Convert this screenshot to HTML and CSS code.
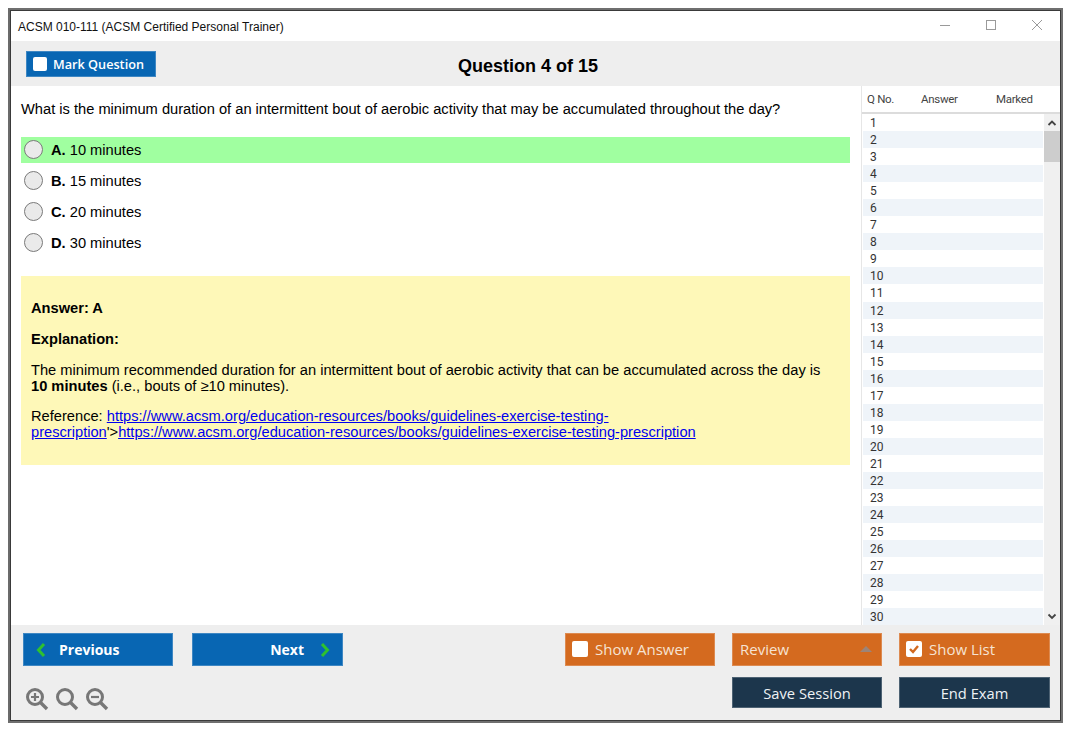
FILE: index.html
```html
<!DOCTYPE html>
<html lang="en">
<head>
<meta charset="utf-8">
<title>ACSM 010-111</title>
<link rel="stylesheet" href="styles.css">
</head>
<body>
<div class="window">
  <header class="titlebar">
    <span class="title">ACSM 010-111 (ACSM Certified Personal Trainer)</span>
    <div class="winctl">
      <svg width="12" height="12" viewBox="0 0 12 12"><path d="M1 6.5h10" stroke="#9a9a9a" fill="none"/></svg>
      <svg width="12" height="12" viewBox="0 0 12 12"><rect x="1.5" y="1.5" width="9" height="9" stroke="#9a9a9a" fill="none"/></svg>
      <svg width="12" height="12" viewBox="0 0 12 12"><path d="M1 1l10 10M11 1L1 11" stroke="#9a9a9a" fill="none"/></svg>
    </div>
  </header>
  <div class="toolbar">
    <button class="btn blue mark"><span class="box"></span>Mark Question</button>
    <h1 class="qcount">Question 4 of 15</h1>
  </div>
  <div class="main">
    <section class="content">
      <p class="question">What is the minimum duration of an intermittent bout of aerobic activity that may be accumulated throughout the day?</p>
      <div class="options">
        <div class="option correct"><span class="radio"></span><span><b>A.</b> 10 minutes</span></div>
        <div class="option"><span class="radio"></span><span><b>B.</b> 15 minutes</span></div>
        <div class="option"><span class="radio"></span><span><b>C.</b> 20 minutes</span></div>
        <div class="option"><span class="radio"></span><span><b>D.</b> 30 minutes</span></div>
      </div>
      <div class="answer">
        <p class="a-line"><b>Answer: A</b></p>
        <p class="a-line"><b>Explanation:</b></p>
        <p class="a-para">The minimum recommended duration for an intermittent bout of aerobic activity that can be accumulated across the day is <b>10 minutes</b> (i.e., bouts of ≥10 minutes).</p>
        <p class="a-para">Reference: <a href="#">https://www.acsm.org/education-resources/books/guidelines-exercise-testing-prescription</a>'&gt;<a href="#">https://www.acsm.org/education-resources/books/guidelines-exercise-testing-prescription</a></p>
      </div>
    </section>
    <aside class="qlist">
      <div class="qhead"><span class="c1">Q No.</span><span class="c2">Answer</span><span class="c3">Marked</span></div>
      <div class="qbody">
        <div class="rows">
          <div class="row">1</div><div class="row">2</div><div class="row">3</div><div class="row">4</div><div class="row">5</div>
          <div class="row">6</div><div class="row">7</div><div class="row">8</div><div class="row">9</div><div class="row">10</div>
          <div class="row">11</div><div class="row">12</div><div class="row">13</div><div class="row">14</div><div class="row">15</div>
          <div class="row">16</div><div class="row">17</div><div class="row">18</div><div class="row">19</div><div class="row">20</div>
          <div class="row">21</div><div class="row">22</div><div class="row">23</div><div class="row">24</div><div class="row">25</div>
          <div class="row">26</div><div class="row">27</div><div class="row">28</div><div class="row">29</div><div class="row">30</div>
        </div>
        <div class="scrollbar">
          <svg class="arrow" width="16" height="17" viewBox="0 0 16 17"><path d="M4.500 11l3.500-3.500 3.500 3.500" stroke="#444" stroke-width="1.800" fill="none"/></svg>
          <div class="thumb"></div>
          <div class="track"></div>
          <svg class="arrow" width="16" height="17" viewBox="0 0 16 17"><path d="M4.500 6.500l3.500 3.500 3.500-3.500" stroke="#444" stroke-width="1.800" fill="none"/></svg>
        </div>
      </div>
    </aside>
  </div>
  <footer class="footer">
    <div class="foot-left">
      <div class="nav">
        <button class="btn blue navbtn prev"><svg width="12" height="16" viewBox="0 0 12 16"><path d="M9 2L3.500 8 9 14" stroke="#2fc12f" stroke-width="3" fill="none"/></svg>Previous</button>
        <button class="btn blue navbtn next">Next<svg width="12" height="16" viewBox="0 0 12 16"><path d="M3 2l5.500 6L3 14" stroke="#2fc12f" stroke-width="3" fill="none"/></svg></button>
      </div>
      <div class="zoom">
        <svg width="24" height="24" viewBox="0 0 24 24"><circle cx="10" cy="10" r="7.500" stroke="#777" stroke-width="3" fill="none"/><path d="M15.500 15.500L22 22" stroke="#777" stroke-width="3.400" fill="none"/><path d="M6 10h8M10 6v8" stroke="#777" stroke-width="2.200" fill="none"/></svg>
        <svg width="24" height="24" viewBox="0 0 24 24"><circle cx="10" cy="10" r="7.500" stroke="#777" stroke-width="3" fill="none"/><path d="M15.500 15.500L22 22" stroke="#777" stroke-width="3.400" fill="none"/></svg>
        <svg width="24" height="24" viewBox="0 0 24 24"><circle cx="10" cy="10" r="7.500" stroke="#777" stroke-width="3" fill="none"/><path d="M15.500 15.500L22 22" stroke="#777" stroke-width="3.400" fill="none"/><path d="M6 10h8" stroke="#777" stroke-width="2.200" fill="none"/></svg>
      </div>
    </div>
    <div class="foot-right">
      <button class="btn orange"><span class="box"></span>Show Answer</button>
      <button class="btn orange review">Review<span class="caret"></span></button>
      <button class="btn orange"><span class="box"><svg width="14" height="14" viewBox="0 0 14 14"><path d="M3 7l3 3 5-6" stroke="#d2691f" stroke-width="2.400" fill="none"/></svg></span>Show List</button>
      <span></span>
      <button class="btn navy">Save Session</button>
      <button class="btn navy">End Exam</button>
    </div>
  </footer>
</div>
</body>
</html>
```
FILE: styles.css
```css
* { box-sizing: border-box; }
html, body { margin: 0; padding: 0; background: #fff; }
body { padding: 8px 12px 12px 8px; height: 735px; overflow: hidden; font-family: "Liberation Sans", Arial, sans-serif; color: #000; }
.window {
  width: 1055px; height: 715px;
  border: 3px solid #6f6f6f;
  border-left-color: #6b6b6b;
  outline: 1px solid #3a3a3a; outline-offset: -3px;
  display: flex; flex-direction: column; background: #fff;
}
.titlebar { height: 30px; flex: none; display: flex; align-items: center; justify-content: space-between; padding: 2px 17px 0 7px; background: #fff; }
.title { font-size: 12px; color: #111; }
.winctl { display: flex; gap: 34px; margin-top: -5px; }
.toolbar { height: 45px; flex: none; background: #eeeeee; display: flex; align-items: center; position: relative; padding: 0 0 0 15px; }
.qcount { position: absolute; left: 0; right: 15px; margin: 0; text-align: center; font-size: 18px; line-height: 50px; top: 0; font-weight: bold; pointer-events: none; }
.btn { border: 1px solid rgba(255,255,255,.22); margin: 0; color: #fff; font-family: "Open Sans", sans-serif; display: flex; align-items: center; padding: 0; cursor: default; }
.blue { background: #0866b3; }
.orange { background: #d46a1f; }
.navy { background: #1c364c; justify-content: center; font-size: 14.700px; color: #eef2f5; height: 31px; }
.box { width: 14px; height: 14px; background: #fff; border-radius: 2px; display: block; flex: none; }
.mark { width: 130px; height: 26px; margin-top: 1px; font-size: 12.700px; font-weight: 600; padding-left: 6px; gap: 6px; }
.main { flex: 1; min-height: 0; display: flex; }
.content { flex: 1; min-width: 0; padding: 0 11px 0 10px; }
.question { margin: 15px 0 0; font-size: 14.667px; line-height: 17px; }
.options { margin-top: 19px; display: flex; flex-direction: column; gap: 5px; }
.option { height: 26px; display: flex; align-items: center; gap: 8px; padding-left: 3px; font-size: 14.667px; }
.option.correct { background: #a0ffa0; }
.radio { width: 19px; height: 19px; margin-top: -1px; border-radius: 50%; background: #eaeaea; border: 1px solid #7a7a7a; flex: none; }
.answer { margin-top: 20px; height: 189px; background: #fef8b8; padding: 24px 10px 0; font-size: 14.667px; line-height: 16px; }
.answer p { margin: 0; }
.a-line { margin-bottom: 15px !important; }
.a-para { margin-bottom: 14px !important; }
.answer a { color: #0000ee; text-decoration: underline; }
.qlist { width: 199px; flex: none; display: flex; flex-direction: column; border-left: 1px solid #e6e6e6; padding-top: 1px; font-family: Roboto, sans-serif; color: #333; }
.qhead { height: 27px; flex: none; display: flex; align-items: center; font-size: 11.500px; letter-spacing: -0.3px; padding-bottom: 2px; border-bottom: 2px solid #dcdcdc; color: #444; }
.c1 { width: 59px; padding-left: 5px; }
.c2 { width: 75px; }
.qbody { flex: 1; min-height: 0; display: flex; }
.rows { flex: 1; min-width: 0; overflow: hidden; padding-left: 1px; }
.row { height: 17.050px; line-height: 19px; font-size: 12px; padding-left: 7px; margin-right: 1px; }
.row:nth-child(even) { background: #eff4f9; }
.scrollbar { width: 16px; flex: none; background: #f0f0f0; display: flex; flex-direction: column; }
.arrow { flex: none; display: block; }
.thumb { height: 31px; flex: none; background: #cdcdcd; }
.track { flex: 1; }
.footer { height: 95px; flex: none; background: #eeeeee; display: flex; justify-content: space-between; padding: 8px 10px 0 12px; }
.foot-left { display: flex; flex-direction: column; }
.nav { display: flex; gap: 19px; }
.navbtn { width: 150px; height: 33px; font-size: 14px; font-weight: 700; }
.next { width: 151px; }
.prev { padding-left: 11px; gap: 12px; }
.next { padding-right: 11px; gap: 15px; justify-content: flex-end; }
.zoom { display: flex; gap: 6px; margin-top: 21px; margin-left: 2px; }
.foot-right { display: grid; grid-template-columns: 150px 150px 151px; column-gap: 17px; row-gap: 11px; grid-template-rows: 33px 31px; }
.foot-right .orange { font-size: 15px; color: #f6e3d3; padding-left: 6px; padding-bottom: 1px; gap: 7px; }
.foot-right .review { padding-left: 7px; }
.foot-right .box { width: 16px; height: 16px; display: flex; align-items: center; justify-content: center; }
.review { justify-content: space-between; padding-right: 9px; }
.caret { width: 0; height: 0; border-left: 6px solid transparent; border-right: 6px solid transparent; border-bottom: 6px solid #9c8478; }
```
